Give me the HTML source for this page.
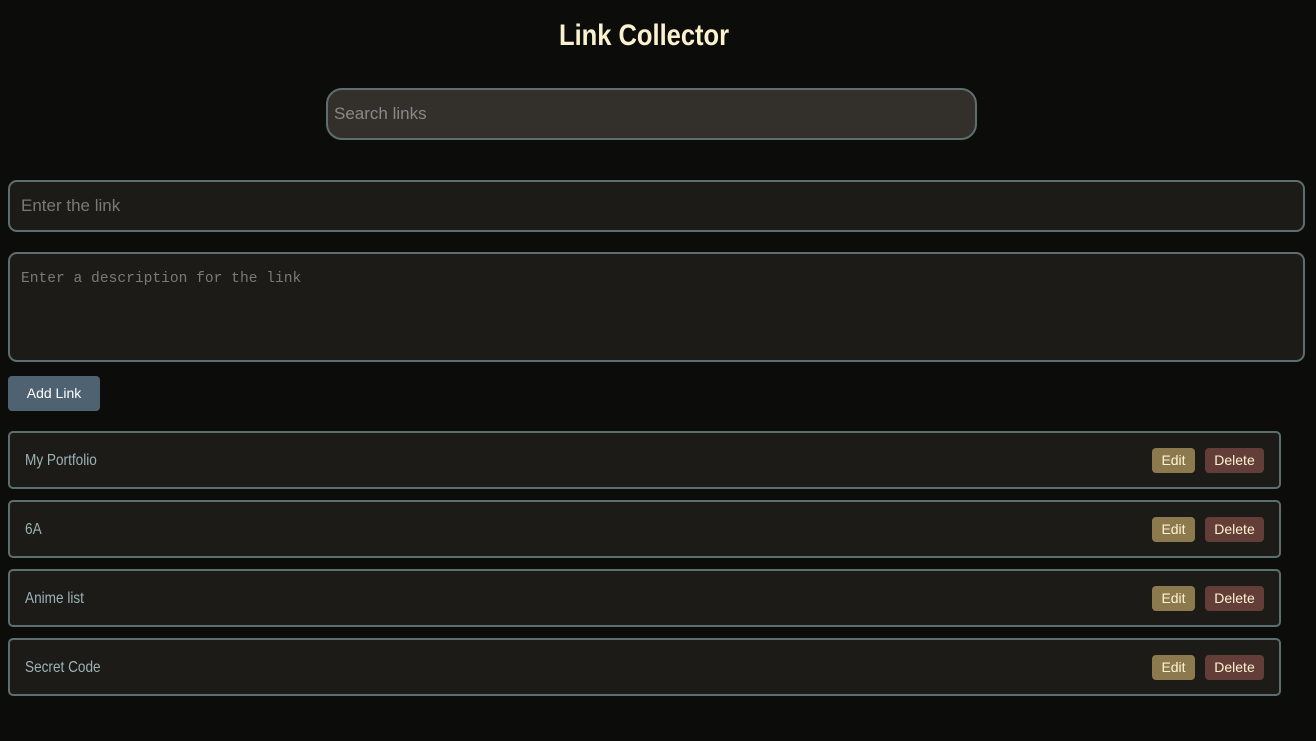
<!DOCTYPE html>
<html><head><style>
*{box-sizing:border-box;margin:0;padding:0}
body{width:1316px;height:741px;background:#0c0c0b;font-family:"Liberation Sans",sans-serif;position:relative;overflow:hidden}
h1{position:absolute;top:19px;left:-14px;width:1316px;text-align:center;color:#fbf1cf;font-size:30px;font-weight:bold;transform:scaleX(.85)}
.box{position:absolute;border:2px solid #5c6f6f;background:#1c1b18;color:#7d7b76}
.search{left:326px;top:88px;width:651px;height:52px;border-radius:16px;background:#33302b;font-size:17px;padding:14px 6px;color:#888}
.link{left:8px;top:180px;width:1297px;height:52px;border-radius:9px;font-size:17px;padding:14px 11px;color:#7a7974}
.desc{left:8px;top:252px;width:1297px;height:110px;border-radius:9px;font-family:"Liberation Mono",monospace;font-size:14.6px;padding:17px 11px;color:#7a7974}
.add{position:absolute;left:8px;top:376px;width:92px;height:35px;border-radius:4px;background:#4f6272;color:#fff;font-size:14px;text-align:center;line-height:35px}
.item{position:absolute;left:8px;width:1273px;height:58px;border:2px solid #5c6f6f;border-radius:5px;background:#1c1b18}
.item span{position:absolute;left:15px;top:19px;color:#9db2b5;font-size:16px;transform:scaleX(.85);transform-origin:left}
.e,.d{position:absolute;top:15px;height:25px;border-radius:4px;color:#fff3d0;font-size:14px;text-align:center;line-height:25px}
.e{left:1142px;width:43px;background:#8c7a4e}
.d{left:1195px;width:59px;background:#633d37}
</style></head><body>
<h1>Link Collector</h1>
<div class="box search">Search links</div>
<div class="box link">Enter the link</div>
<div class="box desc">Enter a description for the link</div>
<div class="add">Add Link</div>
<div class="item" style="top:431px"><span>My Portfolio</span><div class="e">Edit</div><div class="d">Delete</div></div>
<div class="item" style="top:500px"><span>6A</span><div class="e">Edit</div><div class="d">Delete</div></div>
<div class="item" style="top:569px"><span>Anime list</span><div class="e">Edit</div><div class="d">Delete</div></div>
<div class="item" style="top:638px"><span>Secret Code</span><div class="e">Edit</div><div class="d">Delete</div></div>
</body></html>
